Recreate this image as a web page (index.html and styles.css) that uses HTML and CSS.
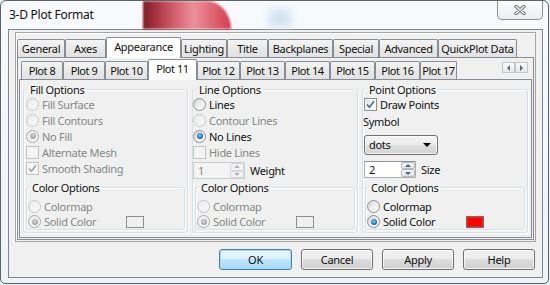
FILE: index.html
```html
<!DOCTYPE html>
<html lang="en">
<head>
  <meta charset="UTF-8" />
  <title>3-D Plot Format</title>
  <link rel="stylesheet" href="styles.css">
</head>
<body>

<div class="window">
  <div class="glass-blob"></div>
  <div class="glass-haze"></div>

  <div class="titlebar">
    <span class="title">3-D Plot Format</span>
    <div class="close-btn">
      <svg width="12" height="10" viewBox="0 0 12 10">
        <path d="M2 1.5 L10 8.5 M10 1.5 L2 8.5" stroke="#666b72" stroke-width="3.4" stroke-linecap="round"/>
        <path d="M2 1.5 L10 8.5 M10 1.5 L2 8.5" stroke="#fff" stroke-width="1.5" stroke-linecap="round"/>
      </svg>
    </div>
  </div>

  <div class="client">
    <div class="sheet">
      <div class="tabs tabs-main">
        <div class="tab">General</div>
        <div class="tab">Axes</div>
        <div class="tab active">Appearance</div>
        <div class="tab">Lighting</div>
        <div class="tab">Title</div>
        <div class="tab">Backplanes</div>
        <div class="tab">Special</div>
        <div class="tab">Advanced</div>
        <div class="tab">QuickPlot Data</div>
      </div>

      <div class="page page-main">
        <div class="tabs tabs-plot">
          <div class="tab">Plot 8</div>
          <div class="tab">Plot 9</div>
          <div class="tab">Plot 10</div>
          <div class="tab active">Plot 11</div>
          <div class="tab">Plot 12</div>
          <div class="tab">Plot 13</div>
          <div class="tab">Plot 14</div>
          <div class="tab">Plot 15</div>
          <div class="tab">Plot 16</div>
          <div class="tab">Plot 17</div>
          <div class="tab-scroll">
            <span class="scroll-btn"><i class="tri-left"></i></span>
            <span class="scroll-btn"><i class="tri-right"></i></span>
          </div>
        </div>

        <div class="page page-plot">
          <div class="groups">

            <!-- fill -->
            <fieldset class="group group-fill">
              <legend>Fill Options</legend>
              <div class="group-body">
                <div class="opt disabled"><span class="radio"></span><span class="lbl">Fill Surface</span></div>
                <div class="opt disabled"><span class="radio"></span><span class="lbl">Fill Contours</span></div>
                <div class="opt disabled"><span class="radio checked"></span><span class="lbl">No Fill</span></div>
                <div class="opt disabled"><span class="check"></span><span class="lbl">Alternate Mesh</span></div>
                <div class="opt disabled">
                  <span class="check">
                    <svg width="11" height="11" viewBox="0 0 11 11"><path d="M2 5.5 L4.5 8.2 L9 2.2" fill="none" stroke="#a4a4a4" stroke-width="1.6"/></svg>
                  </span>
                  <span class="lbl">Smooth Shading</span>
                </div>

                <fieldset class="group sub">
                  <legend>Color Options</legend>
                  <div class="opt disabled"><span class="radio"></span><span class="lbl">Colormap</span></div>
                  <div class="opt disabled"><span class="radio checked"></span><span class="lbl">Solid Color</span><span class="swatch"></span></div>
                </fieldset>
              </div>
            </fieldset>

            <!-- lines -->
            <fieldset class="group group-line">
              <legend>Line Options</legend>
              <div class="group-body">
                <div class="opt tight"><span class="radio"></span><span class="lbl">Lines</span></div>
                <div class="opt tight disabled"><span class="radio"></span><span class="lbl">Contour Lines</span></div>
                <div class="opt tight"><span class="radio checked"></span><span class="lbl">No Lines</span></div>
                <div class="opt tight disabled"><span class="check"></span><span class="lbl">Hide Lines</span></div>
                <div class="spin-row tight disabled">
                  <div class="spin">
                    <span class="spin-val">1</span>
                    <span class="spin-btns">
                      <span class="spin-btn"><i class="tri-up"></i></span>
                      <span class="spin-btn"><i class="tri-down"></i></span>
                    </span>
                  </div>
                  <span class="spin-lbl">Weight</span>
                </div>

                <fieldset class="group sub">
                  <legend>Color Options</legend>
                  <div class="opt disabled"><span class="radio"></span><span class="lbl">Colormap</span></div>
                  <div class="opt disabled"><span class="radio checked"></span><span class="lbl">Solid Color</span><span class="swatch"></span></div>
                </fieldset>
              </div>
            </fieldset>

            <!-- points -->
            <fieldset class="group group-point">
              <legend>Point Options</legend>
              <div class="group-body">
                <div class="opt nudge">
                  <span class="check">
                    <svg width="11" height="11" viewBox="0 0 11 11"><path d="M2 5.5 L4.5 8.2 L9 2.2" fill="none" stroke="#4b6a9c" stroke-width="1.7"/></svg>
                  </span>
                  <span class="lbl">Draw Points</span>
                </div>
                <div class="field-lbl">Symbol</div>
                <div class="combo nudge"><span>dots</span><i class="combo-arrow"></i></div>
                <div class="spin-row nudge">
                  <div class="spin">
                    <span class="spin-val">2</span>
                    <span class="spin-btns">
                      <span class="spin-btn"><i class="tri-up"></i></span>
                      <span class="spin-btn"><i class="tri-down"></i></span>
                    </span>
                  </div>
                  <span class="spin-lbl">Size</span>
                </div>

                <fieldset class="group sub">
                  <legend>Color Options</legend>
                  <div class="opt"><span class="radio"></span><span class="lbl">Colormap</span></div>
                  <div class="opt"><span class="radio checked"></span><span class="lbl">Solid Color</span><span class="swatch red"></span></div>
                </fieldset>
              </div>
            </fieldset>

          </div>
        </div>
      </div>
    </div>

    <div class="buttons">
      <button class="btn default">OK</button>
      <button class="btn">Cancel</button>
      <button class="btn">Apply</button>
      <button class="btn">Help</button>
    </div>
  </div>
</div>

</body>
</html>
```

FILE: styles.css
```css
* {
  box-sizing: border-box;
}
body {
  margin: 0;
  width: 550px;
  height: 285px;
  overflow: hidden;
  background: #e6f3f6;
  font-family: 'Noto Sans', 'Open Sans', sans-serif;
  font-size: 11px;
  letter-spacing: -0.3px;
  color: #111;
}

/* window frame */
.window {
  position: relative;
  width: 549px;
  height: 284px;
  border: 1px solid #5d6168;
  border-radius: 6px 6px 5px 5px;
  background: linear-gradient(#f8fafd, #eef3f8);
  overflow: hidden;
}
.glass-blob {
  position: absolute;
  left: 142px;
  top: 0;
  width: 88px;
  height: 28px;
  border-top-right-radius: 26px 30px;
  background: linear-gradient(90deg, #751118 0%, #a82a3a 16%, #d8626f 40%, #e88b96 58%, #df5c6b 80%, #d03345 100%);
  filter: blur(1.2px);
  opacity: 0.95;
}
.glass-haze {
  position: absolute;
  left: 268px;
  top: 8px;
  width: 22px;
  height: 18px;
  background: #d3e3f2;
  filter: blur(4px);
}
.titlebar {
  position: relative;
  height: 28px;
  display: flex;
  align-items: flex-start;
}
.title {
  padding: 6px 0 0 8px;
  font-size: 12px;
  line-height: 15px;
  letter-spacing: -0.25px;
}
.close-btn {
  margin-left: auto;
  margin-right: 5px;
  width: 46px;
  height: 19px;
  border: 1px solid #8a9099;
  border-top: none;
  border-radius: 0 0 5px 5px;
  background: linear-gradient(#fdfdfe, #e8edf3);
  display: flex;
  align-items: center;
  justify-content: center;
}

/* client area */
.client {
  margin-left: 7px;
  width: 535px;
  height: 249px;
  border: 1px solid #7f8690;
  background: #f0f0f0;
}
.sheet {
  margin: 2px 0 0 6px;
  width: 521px;
  height: 210px;
  border: 1px solid #a5a5a5;
  box-shadow: inset 1px 1px 0 #fff;
}

/* tabs */
.tabs {
  display: flex;
  align-items: flex-end;
  height: 20px;
}
.tabs-main {
  margin: 4px 0 0 1px;
}
.tabs-plot {
  margin: 1px 0 0 3px;
  letter-spacing: -0.45px;
}
.tab {
  height: 18px;
  border: 1px solid #898c95;
  border-bottom: none;
  border-radius: 2px 2px 0 0;
  background: linear-gradient(#f4f4f4, #e9e9e9 50%, #e2e2e2);
  text-align: center;
  line-height: 17px;
  white-space: nowrap;
  overflow: hidden;
}
.tab.active {
  position: relative;
  z-index: 1;
  height: 21px;
  margin-bottom: -1px;
  background: #fff;
  line-height: 18px;
}
.tabs-main .tab:nth-child(1) { width: 48px; }
.tabs-main .tab:nth-child(2) { width: 41px; }
.tabs-main .tab:nth-child(3) { width: 75px; }
.tabs-main .tab:nth-child(4) { width: 46px; }
.tabs-main .tab:nth-child(5) { width: 41px; }
.tabs-main .tab:nth-child(6) { width: 65px; }
.tabs-main .tab:nth-child(7) { width: 46px; }
.tabs-main .tab:nth-child(8) { width: 59px; }
.tabs-main .tab:nth-child(9) { width: 79px; }

.tabs-plot .tab:nth-child(1) { width: 42px; }
.tabs-plot .tab:nth-child(2) { width: 42px; }
.tabs-plot .tab:nth-child(3) { width: 43px; }
.tabs-plot .tab:nth-child(4) { width: 49px; }
.tabs-plot .tab:nth-child(5) { width: 43px; }
.tabs-plot .tab:nth-child(6) { width: 45px; }
.tabs-plot .tab:nth-child(7) { width: 45px; }
.tabs-plot .tab:nth-child(8) { width: 45px; }
.tabs-plot .tab:nth-child(9) { width: 45px; }
.tabs-plot .tab:nth-child(10) { width: 37px; }

.tab-scroll {
  display: flex;
  align-self: flex-start;
  margin: 3px 5px 0 auto;
}
.scroll-btn {
  width: 13px;
  height: 11px;
  border: 1px solid #c4c6ca;
  background: linear-gradient(#fbfbfb, #e8e8e8);
  display: flex;
  align-items: center;
  justify-content: center;
}
.tri-left {
  border-top: 3px solid transparent;
  border-bottom: 3px solid transparent;
  border-right: 3px solid #59647a;
}
.tri-right {
  border-top: 3px solid transparent;
  border-bottom: 3px solid transparent;
  border-left: 3px solid #59647a;
}

/* pages */
.page {
  border: 1px solid #898c95;
  background: #f0f0f0;
}
.page-main {
  margin: 0 1px;
  height: 183px;
}
.page-plot {
  margin: 0 1px;
  height: 159px;
}
.groups {
  display: flex;
  gap: 4px;
  padding: 2px 0 0 3px;
}

/* group boxes */
.group {
  margin: 0;
  min-width: 0;
  padding: 0 2px 1px 2px;
  border: 1px solid #d5dfe5;
  border-radius: 3px;
  box-shadow: 1px 1px 0 #fff, inset 1px 1px 0 #fff;
}
.group legend {
  padding: 0 2px;
  margin-left: 2px;
  line-height: 14px;
  font: inherit;
  letter-spacing: inherit;
}
.group-fill { width: 165px; }
.group-line { width: 166px; }
.group-point { width: 166px; }
.group-body {
  height: 134px;
  display: flex;
  flex-direction: column;
}
.group.sub {
  margin-top: auto;
  margin-bottom: 1px;
  padding: 4px 1px 0 1px;
}
.group.sub legend {
  margin-left: 2px;
}

/* options */
.opt {
  display: flex;
  align-items: center;
  height: 15.8px;
}
.sub .opt {
  height: 15px;
}
.tight {
  margin-left: -2px;
}
.nudge {
  margin-left: -1px;
}
.lbl {
  padding-left: 3px;
  white-space: nowrap;
}
.disabled {
  color: #868686;
}
.radio {
  position: relative;
  flex: none;
  width: 13px;
  height: 13px;
  border-radius: 50%;
  border: 1px solid #8e8f8f;
  background: linear-gradient(135deg, #d6d6d6, #f6f6f6 70%, #ffffff);
}
.disabled .radio {
  border-color: #c6c6c6;
  background: linear-gradient(135deg, #ececec, #f8f8f8);
}
.radio.checked::after {
  content: "";
  position: absolute;
  left: 2.5px;
  top: 2.5px;
  width: 6px;
  height: 6px;
  border-radius: 50%;
  background: radial-gradient(circle at 45% 40%, #7fd0ff, #1f78c0 55%, #0b3460);
}
.disabled .radio.checked {
  border-color: #a9a9a9;
}
.disabled .radio.checked::after {
  background: radial-gradient(circle at 45% 40%, #dcdcdc, #a6a6a6 60%, #8c8c8c);
}
.check {
  flex: none;
  width: 13px;
  height: 13px;
  border: 1px solid #8e8f8f;
  background: linear-gradient(135deg, #dcdcdc, #f8f8f8 60%, #fff);
  box-shadow: inset 0 0 0 1px #f4f4f4;
  display: flex;
  align-items: center;
  justify-content: center;
}
.disabled .check {
  border-color: #c3c3c3;
  background: #f4f4f4;
}
.swatch {
  width: 18px;
  height: 12px;
  margin: 0 39px 0 auto;
  border: 1px solid #8d8d8d;
  background: #f0f0f0;
}
.swatch.red {
  border-color: #6f6f6f;
  background: #f00;
  box-shadow: inset 0 0 0 1px #ff1a1a;
}

/* spinner */
.spin-row {
  display: flex;
  align-items: center;
  margin-top: 2px;
  height: 17px;
}
.spin {
  display: flex;
  width: 52px;
  height: 17px;
  border: 1px solid #abadb3;
  border-top-color: #8f929a;
  background: #fff;
}
.disabled .spin {
  border-color: #c9cbcf;
  background: #f4f4f4;
}
.spin-val {
  flex: 1;
  padding-left: 4px;
  line-height: 15px;
}
.spin-btns {
  width: 14px;
  display: flex;
  flex-direction: column;
}
.spin-btn {
  flex: 1;
  border: 1px solid #b5b8bd;
  border-radius: 2px;
  background: linear-gradient(#f6f6f6, #e2e4e8);
  display: flex;
  align-items: center;
  justify-content: center;
}
.disabled .spin-btn {
  border-color: #d6d7da;
  background: #f2f2f2;
}
.tri-up {
  border-left: 3px solid transparent;
  border-right: 3px solid transparent;
  border-bottom: 3px solid #4c607f;
}
.tri-down {
  border-left: 3px solid transparent;
  border-right: 3px solid transparent;
  border-top: 3px solid #4c607f;
}
.disabled .tri-up { border-bottom-color: #b4b4b4; }
.disabled .tri-down { border-top-color: #b4b4b4; }
.spin-lbl {
  padding-left: 5px;
  color: #111;
}

/* point group */
.field-lbl {
  height: 18px;
  line-height: 18px;
  margin-left: -2px;
}
.combo {
  margin-top: 4px;
  width: 74px;
  height: 20px;
  border: 1px solid #707070;
  border-radius: 3px;
  background: linear-gradient(#f4f4f4, #ebebeb 50%, #dfdfdf 50%, #d2d2d2);
  box-shadow: inset 0 0 0 1px rgba(255, 255, 255, 0.7);
  display: flex;
  align-items: center;
  padding: 0 6px 0 4px;
}
.combo-arrow {
  margin-left: auto;
  border-left: 4px solid transparent;
  border-right: 4px solid transparent;
  border-top: 4px solid #000;
}
.group-point .spin-row {
  margin-top: 6px;
}

/* dialog buttons */
.buttons {
  display: flex;
  justify-content: flex-end;
  margin-top: 7px;
  padding-right: 7px;
  gap: 9px;
}
.btn {
  width: 72px;
  height: 21px;
  padding: 0;
  border: 1px solid #707070;
  border-radius: 3px;
  background: linear-gradient(#f2f2f2, #ebebeb 50%, #dddddd 50%, #cfcfcf);
  box-shadow: inset 0 0 0 1px rgba(255, 255, 255, 0.75);
  font: inherit;
  letter-spacing: inherit;
  color: #111;
}
.btn.default {
  width: 73px;
  border-color: #3c7fb1;
  background: linear-gradient(#eaf6fd, #d9f0fc 50%, #bee6fd 50%, #a7d9f5);
  box-shadow: inset 0 0 0 1px #a8dcf6;
}
```
